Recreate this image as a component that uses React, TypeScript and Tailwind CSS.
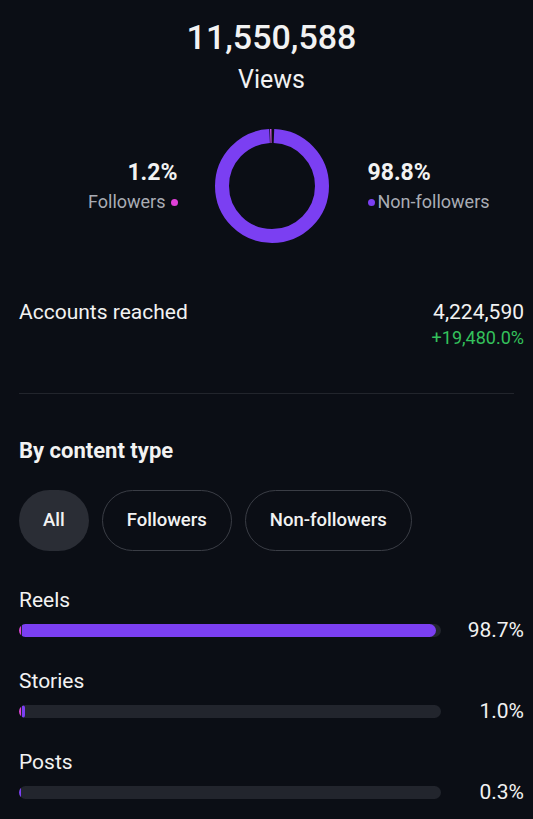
const C = 2 * Math.PI * 50;

const Donut = () => (
  <svg width="114" height="114" viewBox="0 0 114 114">
    <g transform="rotate(-90 57 57)">
      <circle
        cx="57"
        cy="57"
        r="50"
        fill="none"
        stroke="#7b3ff2"
        strokeWidth="14"
        strokeDasharray={`${C - 5} ${C}`}
        strokeDashoffset={-2}
      />
      <circle
        cx="57"
        cy="57"
        r="50"
        fill="none"
        stroke="#c94fe0"
        strokeWidth="14"
        strokeDasharray={`1.3 ${C}`}
        strokeDashoffset={-(C - 2.3)}
      />
    </g>
  </svg>
);

type Row = { label: string; pct: string; pink: number; purple: number };

const rows: Row[] = [
  { label: 'Reels', pct: '98.7%', pink: 2, purple: 98.2 },
  { label: 'Stories', pct: '1.0%', pink: 2, purple: 0.6 },
  { label: 'Posts', pct: '0.3%', pink: 0, purple: 0.5 },
];

const Bar = ({ row }: { row: Row }) => (
  <div className="mb-[23px]">
    <div className="text-[21px] leading-[28px] text-[#f2f2f2]">{row.label}</div>
    <div className="mt-[2px] grid grid-cols-[1fr_83px] items-center">
      <div className="flex h-[13px] items-stretch overflow-hidden rounded-full bg-[#22252d]">
        {row.pink > 0 && <div className="mr-px w-[2px] shrink-0 bg-[#e040d8]" />}
        <div
          className="min-w-[2px] rounded-r-full bg-[#7b3ff2]"
          style={{ width: `${row.purple}%` }}
        />
      </div>
      <div className="text-right text-[21px] leading-[28px] text-[#f2f2f2]">{row.pct}</div>
    </div>
  </div>
);

export default function App() {
  return (
    <div
      className="min-h-screen bg-[#0b0e15] pl-[19px] pr-[9px] text-[#f2f2f2]"
      style={{ fontFamily: 'Roboto, "Noto Sans", sans-serif' }}
    >
      {/* Views header */}
      <div className="pt-[17px] text-center">
        <div className="text-[34px] font-medium leading-[40px]">11,550,588</div>
        <div className="mt-[8px] text-[25px] leading-[30px]">Views</div>
      </div>

      {/* Donut */}
      <div className="mt-[34px] grid grid-cols-[1fr_114px_1fr] items-center">
        <div className="flex flex-col items-end pr-[37px]">
          <div className="text-[23px] font-bold leading-[30px]">1.2%</div>
          <div className="mt-[2px] flex items-center gap-[5px] text-[18px] leading-[24px] text-[#a9acb4]">
            Followers
            <span className="h-[7px] w-[7px] rounded-full bg-[#e040d8]" />
          </div>
        </div>
        <Donut />
        <div className="flex flex-col items-start pl-[39px]">
          <div className="text-[23px] font-bold leading-[30px]">98.8%</div>
          <div className="mt-[2px] flex items-center gap-[3px] text-[18px] leading-[24px] text-[#a9acb4]">
            <span className="h-[7px] w-[7px] rounded-full bg-[#7b3ff2]" />
            Non-followers
          </div>
        </div>
      </div>

      {/* Accounts reached */}
      <div className="mt-[55px] flex justify-between">
        <div className="text-[21px] leading-[28px]">Accounts reached</div>
        <div className="flex flex-col items-end">
          <div className="text-[21px] leading-[28px]">4,224,590</div>
          <div className="text-[18px] leading-[24px] text-[#34c15c]">+19,480.0%</div>
        </div>
      </div>

      <div className="mr-[10px] mt-[43px] h-px bg-[#22252c]" />

      {/* By content type */}
      <div className="mt-[43px] text-[22px] font-bold leading-[28px]">By content type</div>

      <div className="mt-[25px] flex gap-[13px]">
        <button className="h-[61px] rounded-full bg-[#2a2d35] px-6 text-[18.5px] font-medium">All</button>
        <button className="h-[61px] rounded-full border border-[#3a3d45] px-6 text-[18.5px] font-medium">
          Followers
        </button>
        <button className="h-[61px] rounded-full border border-[#3a3d45] px-6 text-[18.5px] font-medium">
          Non-followers
        </button>
      </div>

      <div className="mt-[35px]">
        {rows.map((r) => (
          <Bar key={r.label} row={r} />
        ))}
      </div>
    </div>
  );
}
